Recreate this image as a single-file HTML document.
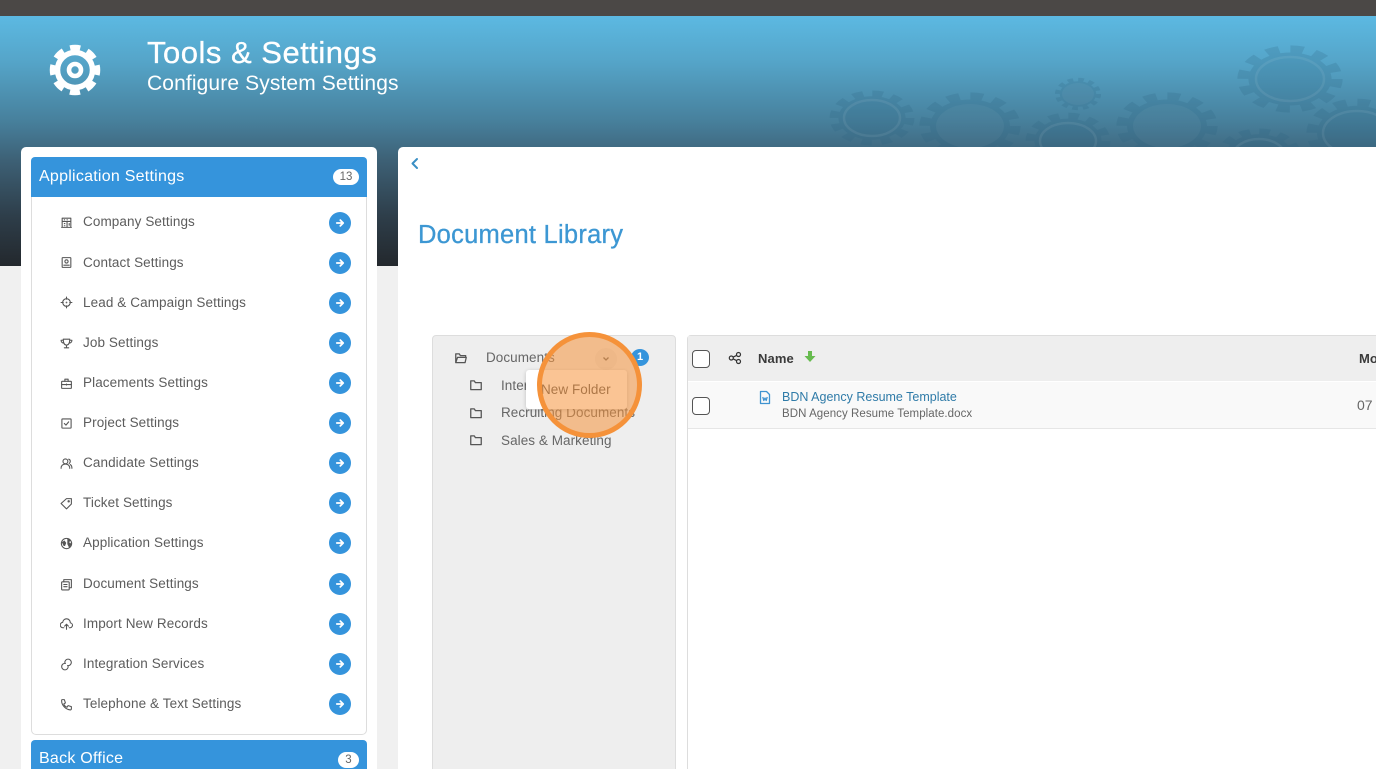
<!DOCTYPE html>
<html><head><meta charset="utf-8"><title>Tools &amp; Settings</title>
<style>
html,body{margin:0;padding:0;width:1376px;height:769px;overflow:hidden}
body{background:#f0f0f0;font-family:"Liberation Sans",sans-serif;color:#555}
#w{position:relative;width:1376px;height:769px;overflow:hidden;background:#f0f0f0}
.a{position:absolute;white-space:nowrap}
.t{position:absolute;white-space:nowrap;left:83px;margin-top:1px;font-size:13.5px;line-height:16px;color:#5c5c5c;letter-spacing:.1px}
.c{position:absolute;left:329px;width:22px;height:22px;border-radius:50%;background:#3594dc}
.c svg{position:absolute;left:5px;top:5px}
.i{position:absolute;left:60px;margin-top:.5px;width:13px;height:13px;fill:none;stroke:#555;stroke-width:2;stroke-linecap:round;stroke-linejoin:round}
.f{position:absolute;width:14px;height:14px;fill:none;stroke:#555;stroke-width:2.2;stroke-linejoin:round}
.cb{position:absolute;left:692px;width:16px;height:16px;border:1.3px solid #555;border-radius:4px;background:#fff}
.d{position:absolute;white-space:nowrap;font-size:13.5px;line-height:16px;color:#666;letter-spacing:.06px}
</style></head><body><div id="w">

<svg width="0" height="0" style="position:absolute"><defs>
<symbol id="ar" viewBox="0 0 12 12"><path d="M2.800 6h6.400M6.300 3.100 9.200 6 6.300 8.900" fill="none" stroke="#fff" stroke-width="1.800" stroke-linecap="round" stroke-linejoin="round"/></symbol>
<g id="gear"><circle r="32" fill="#2b6280"/><circle r="35" fill="none" stroke="#2b6280" stroke-width="11" stroke-dasharray="9.800 8.530"/></g>
</defs></svg>

<div class="a" style="left:0;top:0;width:1376px;height:16px;background:#4b4846"></div>
<div class="a" style="left:0;top:16px;width:1376px;height:250px;background:linear-gradient(#5cb9e2 0%,#55a5c9 18%,#47809c 42%,#3d6075 58%,#2e3e4a 80%,#23282d 100%)"></div>

<svg class="a" style="left:800px;top:16px" width="576" height="131" viewBox="0 16 576 131">
<g opacity=".2">
<use href="#gear" transform="translate(72 118) scale(1.05 .68)"/>
<use href="#gear" transform="translate(170 126) scale(1.25 .83)"/>
<use href="#gear" transform="translate(278 94) scale(.57 .4)"/>
<use href="#gear" transform="translate(268 141) scale(1.05 .7)"/>
<use href="#gear" transform="translate(367 126) scale(1.25 .83)"/>
<use href="#gear" transform="translate(490 79) scale(1.3 .83)"/>
<use href="#gear" transform="translate(557 133) scale(1.25 .85)"/>
<use href="#gear" transform="translate(459 156) scale(1.05 .68)"/>
</g>
<g fill="#fff" fill-opacity=".04">
<ellipse cx="170" cy="126" rx="34" ry="22"/><ellipse cx="367" cy="126" rx="34" ry="22"/><ellipse cx="278" cy="94" rx="16" ry="11"/>
</g>
<g fill="none" stroke="#fff" stroke-opacity=".07" stroke-width="2.500">
<ellipse cx="72" cy="118" rx="28" ry="18"/><ellipse cx="268" cy="141" rx="28" ry="18"/><ellipse cx="490" cy="79" rx="34" ry="22"/><ellipse cx="557" cy="133" rx="34" ry="22"/><ellipse cx="459" cy="156" rx="26" ry="17"/>
</g>
</svg>

<svg class="a" style="left:49px;top:44px" width="52" height="52" viewBox="0 0 52 52" fill="none" stroke="#fff">
<circle cx="26" cy="26" r="17.500" stroke-width="5.500"/>
<circle cx="26" cy="26" r="22" stroke-width="6.500" stroke-dasharray="10 7.280" stroke-dashoffset="5"/>
<circle cx="26" cy="26" r="6" stroke-width="4.600"/>
</svg>

<div class="a" style="left:147px;top:35px;font-size:31px;line-height:36px;color:#fff;letter-spacing:.5px;-webkit-text-stroke:.3px #fff">Tools &amp; Settings</div>
<div class="a" style="left:147px;top:71px;font-size:21px;line-height:26px;color:#fff;letter-spacing:.12px">Configure System Settings</div>

<!-- Left panel -->
<div class="a" style="left:21px;top:147px;width:356px;height:640px;background:#fff;border-radius:5px"></div>
<div class="a" style="left:31px;top:157px;width:336px;height:40px;background:#3594dc;border-radius:4px 4px 0 0"></div>
<div class="a" style="left:39px;top:167px;font-size:16px;line-height:20px;color:#fff;letter-spacing:.25px">Application Settings</div>
<div class="a" style="left:333px;top:169px;width:26px;height:16px;background:#fff;border-radius:8px;font-size:11.500px;line-height:17px;text-align:center;color:#666">13</div>
<div class="a" style="left:31px;top:197px;width:334px;height:537px;border:1px solid #ddd;border-top:0;border-radius:0 0 5px 5px"></div>

<div class="t" style="top:213px">Company Settings</div>
<div class="t" style="top:254px">Contact Settings</div>
<div class="t" style="top:294px">Lead &amp; Campaign Settings</div>
<div class="t" style="top:334px">Job Settings</div>
<div class="t" style="top:374px">Placements Settings</div>
<div class="t" style="top:414px">Project Settings</div>
<div class="t" style="top:454px">Candidate Settings</div>
<div class="t" style="top:494px">Ticket Settings</div>
<div class="t" style="top:534px">Application Settings</div>
<div class="t" style="top:575px">Document Settings</div>
<div class="t" style="top:615px">Import New Records</div>
<div class="t" style="top:655px">Integration Services</div>
<div class="t" style="top:695px">Telephone &amp; Text Settings</div>

<svg class="i" style="top:215px" viewBox="0 0 24 24"><path d="M3 21h18M4 21V4h16v17M4 10h16M13 10v11M8 7h.5M13 7h.5M8 14h1M8 18h1M17 14v3"/></svg>
<svg class="i" style="top:255px" viewBox="0 0 24 24"><rect x="4" y="3" width="16" height="18" rx="1"/><circle cx="12" cy="10" r="3"/><path d="M7 17h10"/></svg>
<svg class="i" style="top:295px" viewBox="0 0 24 24"><circle cx="12" cy="12" r="7"/><path d="M12 2v4M12 18v4M2 12h4M18 12h4"/><circle cx="12" cy="12" r=".6"/></svg>
<svg class="i" style="top:336px" viewBox="0 0 24 24"><path d="M6 4h12c0 7-2 11-6 11S6 11 6 4zM6 6H2c0 3 2 5 4.500 5M18 6h4c0 3-2 5-4.500 5M12 15v5M8 20h8"/></svg>
<svg class="i" style="top:376px" viewBox="0 0 24 24"><rect x="3" y="8" width="18" height="13" rx="1"/><path d="M9 8V4h6v4M3 14h18M12 13v2"/></svg>
<svg class="i" style="top:416px" viewBox="0 0 24 24"><rect x="3.500" y="3.500" width="17" height="17" rx="1"/><path d="M8 12l3 3 5-6"/></svg>
<svg class="i" style="top:456px" viewBox="0 0 24 24"><circle cx="10" cy="8" r="4.500"/><path d="M2 21c0-5 3-8 8-8s8 3 8 8M16 4c2 .5 3 2 3 4s-1 3-2 4M19 14c2 1 3 4 3 7"/></svg>
<svg class="i" style="top:496px" viewBox="0 0 24 24"><path d="M2 12 12 3h9v10l-9 9z"/><circle cx="16" cy="8" r="1.200"/></svg>
<svg class="i" style="top:536px" viewBox="0 0 24 24"><circle cx="12" cy="12" r="9.500"/><path d="M4 10l4-3 3 4-2 5H7zM14 3l5 3-3 4 5 3-4 6-3-6z" fill="#555" stroke-width="1"/></svg>
<svg class="i" style="top:577px" viewBox="0 0 24 24"><rect x="3" y="7" width="14" height="15" rx="1.500"/><path d="M7 7V3h14v15h-4M7 12h6M7 16h6"/></svg>
<svg class="i" style="top:617px" viewBox="0 0 24 24"><path d="M7 18H6a5 5 0 0 1-1-10 7 7 0 0 1 14 1 4.500 4.500 0 0 1-1 9h-1M12 21v-9M8.500 15l3.500-3.500 3.500 3.500"/></svg>
<svg class="i" style="top:657px" viewBox="0 0 24 24"><path d="M10 10a6 6 0 1 0 5 5M14 14a6 6 0 1 0-5-5"/></svg>
<svg class="i" style="top:697px" viewBox="0 0 24 24"><path d="M4 3h4l2 6-3 2c1 3 3 5 6 6l2-3 6 2v4c0 1-1 2-2 2C10 21 3 13 3 5c0-1 0-2 1-2z"/></svg>

<div class="c" style="top:212px"><svg width="12" height="12"><use href="#ar"/></svg></div>
<div class="c" style="top:252px"><svg width="12" height="12"><use href="#ar"/></svg></div>
<div class="c" style="top:292px"><svg width="12" height="12"><use href="#ar"/></svg></div>
<div class="c" style="top:332px"><svg width="12" height="12"><use href="#ar"/></svg></div>
<div class="c" style="top:372px"><svg width="12" height="12"><use href="#ar"/></svg></div>
<div class="c" style="top:412px"><svg width="12" height="12"><use href="#ar"/></svg></div>
<div class="c" style="top:452px"><svg width="12" height="12"><use href="#ar"/></svg></div>
<div class="c" style="top:492px"><svg width="12" height="12"><use href="#ar"/></svg></div>
<div class="c" style="top:532px"><svg width="12" height="12"><use href="#ar"/></svg></div>
<div class="c" style="top:573px"><svg width="12" height="12"><use href="#ar"/></svg></div>
<div class="c" style="top:613px"><svg width="12" height="12"><use href="#ar"/></svg></div>
<div class="c" style="top:653px"><svg width="12" height="12"><use href="#ar"/></svg></div>
<div class="c" style="top:693px"><svg width="12" height="12"><use href="#ar"/></svg></div>

<div class="a" style="left:31px;top:740px;width:336px;height:40px;background:#3594dc;border-radius:4px 4px 0 0"></div>
<div class="a" style="left:39px;top:749px;font-size:16px;line-height:20px;color:#fff;letter-spacing:.25px">Back Office</div>
<div class="a" style="left:338px;top:752px;width:21px;height:16px;background:#fff;border-radius:8px;font-size:11.500px;line-height:17px;text-align:center;color:#666">3</div>

<!-- Right panel -->
<div class="a" style="left:398px;top:147px;width:990px;height:640px;background:#fff;border-radius:5px 0 0 0"></div>
<svg class="a" style="left:409px;top:157px" width="12" height="13" viewBox="0 0 12 13" fill="none" stroke="#3a8fc4" stroke-width="2" stroke-linecap="round" stroke-linejoin="round"><path d="M8 2 3.500 6.500 8 11"/></svg>
<div class="a" style="left:418px;top:220px;font-size:25.500px;line-height:30px;color:#3c97d3;letter-spacing:.25px;-webkit-text-stroke:.3px #3c97d3">Document Library</div>

<!-- Tree -->
<div class="a" style="left:432px;top:335px;width:242px;height:450px;background:#eee;border:1px solid #ddd;border-radius:4px"></div>
<svg class="f" style="left:454px;top:351px" viewBox="0 0 24 24"><path d="M3 20V5h6l2 3h9v3M3 20h16l2-9H6z"/></svg>
<div class="d" style="left:486px;top:350px">Documents</div>
<div class="a" style="left:595px;top:348px;width:22px;height:22px;border-radius:50%;background:#e4e4e4"></div>
<svg class="a" style="left:601px;top:355px" width="10" height="8" viewBox="0 0 10 8" fill="none" stroke="#666" stroke-width="1.300"><path d="M2.500 2.500 5 5l2.500-2.500"/></svg>
<div class="a" style="left:631px;top:349px;width:18px;height:17px;border-radius:50%;background:#3594dc;color:#fff;font-size:11px;font-weight:bold;line-height:17px;text-align:center">1</div>
<svg class="f" style="left:469px;top:378px" viewBox="0 0 24 24"><path d="M3 20V5h6l2 3h10v12z"/></svg>
<svg class="f" style="left:469px;top:406px" viewBox="0 0 24 24"><path d="M3 20V5h6l2 3h10v12z"/></svg>
<svg class="f" style="left:469px;top:433px" viewBox="0 0 24 24"><path d="M3 20V5h6l2 3h10v12z"/></svg>
<div class="d" style="left:501px;top:378px">Internal</div>
<div class="d" style="left:501px;top:405px">Recruiting Documents</div>
<div class="d" style="left:501px;top:433px">Sales &amp; Marketing</div>

<div class="a" style="left:526px;top:370px;width:101px;height:39px;background:#fff;border-radius:3px;box-shadow:0 1px 4px rgba(0,0,0,.2)"></div>
<div class="d" style="left:541px;top:382px;color:#555">New Folder</div>

<!-- Table -->
<div class="a" style="left:687px;top:335px;width:700px;height:450px;background:#fff;border:1px solid #ddd;border-radius:4px 0 0 0"></div>
<div class="a" style="left:688px;top:336px;width:690px;height:45px;background:#eee"></div>
<div class="a" style="left:688px;top:382px;width:690px;height:46px;background:#f9f9f9;border-bottom:1px solid #e6e6e6"></div>
<div class="cb" style="top:350px"></div>
<div class="cb" style="top:397px"></div>
<svg class="a" style="left:728px;top:351px" width="14" height="14" viewBox="0 0 14 14" fill="none" stroke="#333" stroke-width="1.200"><circle cx="3.300" cy="7" r="2"/><circle cx="10.500" cy="3.500" r="2"/><circle cx="10.500" cy="10.500" r="2"/><path d="M5 6.200 8.800 4.300M5 7.800l3.800 1.900"/></svg>
<div class="a" style="left:758px;top:351px;font-size:13px;line-height:16px;font-weight:bold;color:#3a3a3a;letter-spacing:.1px">Name</div>
<svg class="a" style="left:804px;top:350px" width="12" height="13" viewBox="0 0 12 13" fill="#67bb4f"><path d="M4 1h4v5h3.500L6 12 .5 6H4z"/></svg>
<div class="a" style="left:1359px;top:351px;font-size:13px;line-height:16px;font-weight:bold;color:#3a3a3a">Modified</div>
<svg class="a" style="left:758px;top:390px" width="14" height="15" viewBox="0 0 14 15" fill="none" stroke="#3f93d0" stroke-width="1.300" stroke-linejoin="round"><path d="M2.500 1.500h6l3 3v9h-9z"/><path d="M4.800 7l1 3.500L7 8l1.200 2.500 1-3.500"/></svg>
<div class="a" style="left:782px;top:389px;font-size:12.500px;line-height:16px;color:#2f7ba8">BDN Agency Resume Template</div>
<div class="a" style="left:782px;top:406px;font-size:11.500px;line-height:16px;color:#666;letter-spacing:.06px">BDN Agency Resume Template.docx</div>
<div class="a" style="left:1357px;top:397px;font-size:14px;line-height:16px;color:#666">07 Jul 2024</div>

<!-- Highlight -->
<div class="a" style="left:537px;top:332px;width:95px;height:96px;border:5px solid #f5923a;border-radius:50%;background:rgba(245,147,60,.55)"></div>

</div></body></html>
